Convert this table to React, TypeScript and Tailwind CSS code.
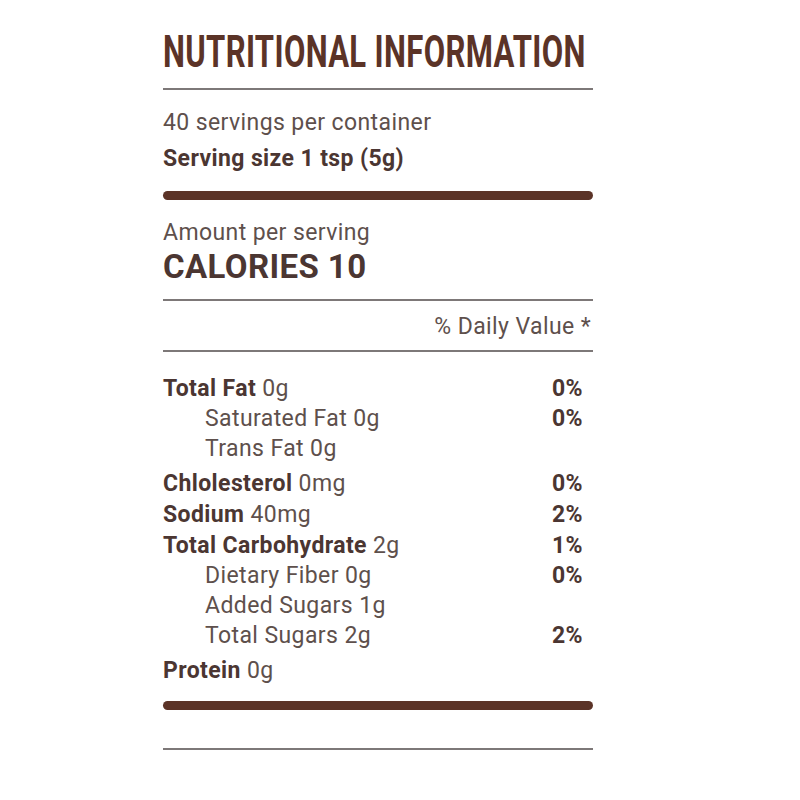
const rows: { label: string; amount: string; dv?: string; subs?: { label: string; dv?: string }[] }[] = [
  {
    label: 'Total Fat',
    amount: '0g',
    dv: '0%',
    subs: [{ label: 'Saturated Fat 0g', dv: '0%' }, { label: 'Trans Fat 0g' }],
  },
  { label: 'Chlolesterol', amount: '0mg', dv: '0%' },
  { label: 'Sodium', amount: '40mg', dv: '2%' },
  {
    label: 'Total Carbohydrate',
    amount: '2g',
    dv: '1%',
    subs: [
      { label: 'Dietary Fiber 0g', dv: '0%' },
      { label: 'Added Sugars 1g' },
      { label: 'Total Sugars 2g', dv: '2%' },
    ],
  },
  { label: 'Protein', amount: '0g' },
];

export default function App() {
  return (
    <div className="min-h-[800px] w-[800px] bg-white font-['Roboto',sans-serif] text-[#5e504c]">
      <div className="ml-[163px] w-[430px] pt-[26px]">
        <h1 className="origin-left scale-x-[0.69] whitespace-nowrap font-['Roboto',sans-serif] text-[45px] font-bold leading-[52px] tracking-[0.5px] text-[#5b3327]">
          NUTRITIONAL INFORMATION
        </h1>
        <div className="mt-[10px] h-[2px] bg-[#7d7878]" />

        <div className="text-[23px] tracking-[0.4px]">
          <p className="mt-[18px] leading-[30px]">40 servings per container</p>
          <p className="mt-[6px] font-bold leading-[30px] text-[#4b3632]">Serving size 1 tsp (5g)</p>
          <div className="mt-[17px] h-[9px] rounded-full bg-[#5b3327]" />

          <p className="mt-[18px] leading-[30px]">Amount per serving</p>
          <p className="text-[33px] font-bold leading-[37px] tracking-[0.4px] text-[#4b3632]">CALORIES 10</p>
          <div className="mt-[14px] h-[2px] bg-[#7d7878]" />

          <p className="mt-[11px] pr-[2px] text-right leading-[30px]">% Daily Value *</p>
          <div className="mt-[8px] h-[2px] bg-[#7d7878]" />

          <div className="mt-[21px]">
            {rows.map((r) => (
              <div key={r.label}>
                <div className="flex h-[31px] items-center justify-between pr-[10px] leading-[31px]">
                  <span>
                    <b className="font-bold text-[#4b3632]">{r.label}</b> {r.amount}
                  </span>
                  {r.dv && <b className="font-bold text-[#4b3632]">{r.dv}</b>}
                </div>
                {r.subs && (
                  <div className="pb-[4px]">
                    {r.subs.map((s) => (
                      <div key={s.label} className="flex h-[30px] items-center justify-between pl-[42px] pr-[10px] leading-[30px]">
                        <span>{s.label}</span>
                        {s.dv && <b className="font-bold text-[#4b3632]">{s.dv}</b>}
                      </div>
                    ))}
                  </div>
                )}
              </div>
            ))}
          </div>

          <div className="mt-[15px] h-[9px] rounded-full bg-[#5b3327]" />
          <div className="mt-[38px] h-[2px] bg-[#7d7878]" />
        </div>
      </div>
    </div>
  );
}
